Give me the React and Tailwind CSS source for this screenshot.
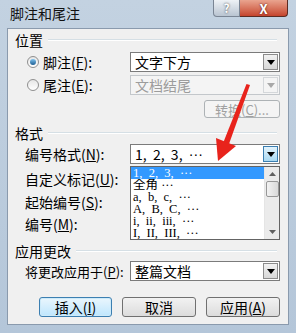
import React from 'react';

const cjk = "font-['Noto_Sans_CJK_SC','Liberation_Sans',sans-serif]";

function Triangle({ color = '#000' }) {
  return (
    <svg width="8" height="5" viewBox="0 0 8 5">
      <path d="M0 0 H8 L4 5 Z" fill={color} />
    </svg>
  );
}

function Combo({ value, disabled, active }) {
  return (
    <div
      className={`flex h-[20px] w-[150px] items-stretch border ${
        disabled ? 'border-[#c3c7cb] bg-[#f4f4f4] text-[#9c9c9c]' : 'border-[#7b7b7b] bg-white text-black'
      }`}
    >
      <div className="flex flex-1 items-center whitespace-pre pl-[4px] text-[14px] leading-none">{value}</div>
      <div
        className={`m-[1px] flex w-[15px] items-center justify-center border ${
          active
            ? 'border-[#3c7fb1] bg-gradient-to-b from-[#e3f3fc] to-[#a9d9f2]'
            : disabled
            ? 'border-[#d4d7da] bg-[#f4f4f4]'
            : 'border-[#8c8c8c] bg-gradient-to-b from-[#f2f2f2] to-[#d8d8d8]'
        }`}
      >
        <Triangle color={disabled ? '#a8a8a8' : '#000'} />
      </div>
    </div>
  );
}

function Group({ title }) {
  return (
    <div className="flex h-[16px] items-center pr-[3px]">
      <span className="text-[14px] leading-none text-black">{title}</span>
      <div className="ml-[5px] flex-1 border-t border-[#d5dfe5] border-b-white border-b" />
    </div>
  );
}

function Radio({ checked }) {
  return (
    <div className="flex h-[12px] w-[12px] items-center justify-center rounded-full border border-[#8f8f8f] bg-gradient-to-b from-[#e6e6e6] to-white">
      {checked && <div className="h-[6px] w-[6px] rounded-full bg-gradient-to-b from-[#7fc4f0] to-[#1d5f93]" />}
    </div>
  );
}

function Btn({ children, primary, disabled, className = '' }) {
  return (
    <div
      className={`flex items-center justify-center whitespace-nowrap rounded-[3px] border leading-none ${
        primary
          ? 'border-[#3c7fb1] bg-gradient-to-b from-[#eaf6fd] to-[#bee6fd] text-black shadow-[inset_0_0_0_1px_#cdeaf9]'
          : disabled
          ? 'border-[#adb2b5] bg-[#f4f4f4] text-[#a0a0a0]'
          : 'border-[#707070] bg-gradient-to-b from-[#f2f2f2] to-[#dcdcdc] text-black'
      } ${className}`}
    >
      {children}
    </div>
  );
}

const listItems = ['全角 ···', 'a,  b,  c,  ···', 'A,  B,  C,  ···', 'i,  ii,  iii,  ···', 'I,  II,  III,  ···'];

export default function App() {
  return (
    <div className={`relative flex h-[333px] w-[296px] flex-col overflow-hidden bg-gradient-to-b from-[#c3d2e1] to-[#b4c6d9] ${cjk}`}>
      {/* title bar */}
      <div className="flex h-[28px] items-start">
        <div className="pl-[10px] pt-[6px] text-[14px] leading-none text-[#111]">脚注和尾注</div>
        <div className="ml-auto mr-[8px] flex">
          <div className="flex h-[17px] w-[27px] items-center justify-center rounded-bl-[4px] border border-t-0 border-[#7a8594] bg-gradient-to-b from-[#eef2f6] to-[#b9c4d1] text-[12px] font-bold leading-none text-white [text-shadow:0_0_2px_#333]">
            ?
          </div>
          <div className="flex h-[17px] w-[48px] items-center justify-center rounded-br-[4px] border border-l-0 border-t-0 border-[#5b2b22] bg-gradient-to-b from-[#e9a48f] to-[#c4432c] text-[13px] font-bold leading-none text-white [text-shadow:0_0_2px_#400]">
            X
          </div>
        </div>
      </div>

      {/* client area */}
      <div className="relative mx-[7px] flex flex-col whitespace-nowrap border border-[#8a9aad] bg-[#f0f0f0] pb-[7px] pl-[7px] pr-[8px] pt-[3px] text-[14px] text-black">
        <Group title="位置" />

        <div className="mt-[4px] flex h-[20px] items-center">
          <div className="flex w-[115px] items-center pl-[12px]">
            <Radio checked />
            <span className="ml-[4px] leading-none">
              脚注(<u>F</u>):
            </span>
          </div>
          <Combo value="文字下方" />
        </div>

        <div className="mt-[3px] flex h-[20px] items-center">
          <div className="flex w-[115px] items-center pl-[12px]">
            <Radio />
            <span className="ml-[4px] leading-none">
              尾注(<u>E</u>):
            </span>
          </div>
          <Combo value="文档结尾" disabled />
        </div>

        <div className="mt-[5px] flex justify-end">
          <Btn disabled className="h-[18px] w-[76px] text-[13px]">
            转换(<u>C</u>)...
          </Btn>
        </div>

        <div className="mt-[7px]">
          <Group title="格式" />
        </div>

        <div className="mt-[3px] flex h-[20px] items-center">
          <div className="w-[115px] pl-[10px] leading-none">
            编号格式(<u>N</u>):
          </div>
          <Combo
            value={
              <>
                1,  2,  3,  <span className="font-['Liberation_Sans',sans-serif]">···</span>
              </>
            }
            active
          />
        </div>

        <div className="mt-[5px] flex h-[20px] items-center pl-[10px] leading-none">
          自定义标记(<u>U</u>):
        </div>
        <div className="mt-[3px] flex h-[20px] items-center pl-[10px] leading-none">
          起始编号(<u>S</u>):
        </div>
        <div className="mt-[2px] flex h-[20px] items-center pl-[10px] leading-none">
          编号(<u>M</u>):
        </div>

        <div className="mt-[9px]">
          <Group title="应用更改" />
        </div>

        <div className="mt-[2px] flex h-[20px] items-center">
          <div className="w-[115px] pl-[10px] text-[13px] leading-none">
            将更改应用于(<u>P</u>):
          </div>
          <Combo value="整篇文档" />
        </div>

        <div className="mt-[16px] flex h-[20px] items-stretch gap-[10px] pl-[24px]">
          <Btn primary className="w-[73px]">
            插入(<u>I</u>)
          </Btn>
          <Btn className="w-[74px]">取消</Btn>
          <Btn className="w-[74px]">
            应用(<u>A</u>)
          </Btn>
        </div>

        {/* open dropdown list */}
        <div className="absolute left-[122px] top-[137px] flex h-[74px] w-[150px] border border-[#646464] bg-white">
          <div className="flex flex-1 flex-col font-['Liberation_Serif','Noto_Sans_CJK_SC',serif] text-[12.5px] leading-[11px]">
            <div className="flex h-[12px] items-center overflow-hidden whitespace-pre bg-[#3399ff] pl-[2px] text-white">1,  2,  3,  ···</div>
            {listItems.map((t) => (
              <div key={t} className="flex h-[12px] items-center overflow-hidden whitespace-pre pl-[2px] text-black">
                {t}
              </div>
            ))}
          </div>
          <div className="flex w-[15px] flex-col items-center border-l border-[#e5e5e5] bg-[#ebebeb]">
            <div className="flex h-[14px] items-center">
              <svg width="7" height="4" viewBox="0 0 7 4">
                <path d="M0 4 L3.5 0 L7 4 Z" fill="#606060" />
              </svg>
            </div>
            <div className="h-[16px] w-[13px] rounded-[2px] border border-[#979797] bg-gradient-to-r from-[#f2f2f2] to-[#d9d9d9]" />
            <div className="mt-auto flex h-[14px] items-center">
              <svg width="7" height="4" viewBox="0 0 7 4">
                <path d="M0 0 L7 0 L3.5 4 Z" fill="#606060" />
              </svg>
            </div>
          </div>
        </div>
      </div>

      {/* red annotation arrow */}
      <svg className="pointer-events-none absolute left-0 top-0" width="296" height="333" viewBox="0 0 296 333">
        <path d="M246.5 84 L250 85 L229 144 L223.5 142 Z" fill="#e8231c" />
        <path d="M218 161 L236 146 L216 138 Z" fill="#e8231c" />
      </svg>
    </div>
  );
}
